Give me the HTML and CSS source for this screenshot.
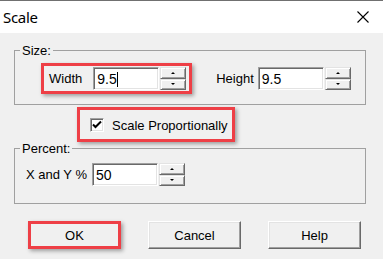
FILE: index.html
```html
<!DOCTYPE html>
<html>
<head lang="en">
    <meta charset="UTF-8">
    <title>Scale</title>
    <link rel="stylesheet" href="styles.css">
</head>
<body>
<div id="dialog">
    <div class="titlebar">
        <span class="title">Scale</span>
        <svg class="close" width="12" height="12" viewBox="0 0 12 12">
            <path d="M0.5 0.5 L11.5 11.5 M11.5 0.5 L0.5 11.5" stroke="#000" stroke-width="1.1" fill="none"/>
        </svg>
    </div>
    <div class="content">
        <fieldset class="group">
            <legend>Size:</legend>
            <div class="size-row">
                <div class="field mark">
                    <span class="label">Width</span>
                    <div class="spin">
                        <div class="input">9.5<span class="caret"></span></div>
                        <div class="arrows">
                            <div class="up"><i></i></div>
                            <div class="down"><i></i></div>
                        </div>
                    </div>
                </div>
                <div class="field height">
                    <span class="label">Height</span>
                    <div class="spin">
                        <div class="input">9.5</div>
                        <div class="arrows">
                            <div class="up"><i></i></div>
                            <div class="down"><i></i></div>
                        </div>
                    </div>
                </div>
            </div>
        </fieldset>
        <div class="check-row">
            <div class="mark check">
                <span class="box">
                    <svg width="12" height="12" viewBox="0 0 12 12">
                        <path d="M2 5.5 L4.5 8 L10 2.5" stroke="#000" stroke-width="2" fill="none"/>
                    </svg>
                </span>
                <span>Scale Proportionally</span>
            </div>
        </div>
        <fieldset class="group percent">
            <legend>Percent:</legend>
            <div class="percent-row">
                <div class="field">
                    <span class="label">X and Y %</span>
                    <div class="spin">
                        <div class="input">50</div>
                        <div class="arrows">
                            <div class="up"><i></i></div>
                            <div class="down"><i></i></div>
                        </div>
                    </div>
                </div>
            </div>
        </fieldset>
        <div class="buttons">
            <div class="btn ok">OK</div>
            <div class="btn">Cancel</div>
            <div class="btn">Help</div>
        </div>
    </div>
</div>
</body>
</html>
```

FILE: styles.css
```css
*{
    margin: 0;
    padding: 0;
    box-sizing: border-box;
}
body{
    font-family: "Liberation Sans", Arial, sans-serif;
    font-size: 13px;
    color: #000;
}
#dialog{
    width: 383px;
    height: 259px;
    background: #f0f0f0;
}
.titlebar{
    height: 33px;
    background: #fff;
    border-top: 1px solid #707070;
    display: flex;
    align-items: center;
    justify-content: space-between;
    padding: 0 14px 1px 3px;
}
.title{
    font-family: "Noto Sans", "Open Sans", sans-serif;
    font-size: 15px;
    letter-spacing: -0.3px;
}
.content{
    padding: 10px 17px 0 14px;
}
.group{
    border: 1px solid #a0a0a0;
    min-width: 0;
}
.group legend{
    margin-left: 5px;
    padding: 0 2px;
    line-height: 15px;
}
.size-row{
    display: flex;
    align-items: center;
    padding: 5px 0 10px 26px;
}
.field{
    display: flex;
    align-items: center;
}
.mark{
    border: 3px solid #ee3f46;
    box-shadow: 2px 2px 4px rgba(0, 0, 0, 0.35);
}
.size-row .mark{
    padding: 1px 3px 1px 5px;
}
.size-row .mark .label{
    margin-right: 11px;
}
.height{
    margin-left: 24px;
}
.height .label{
    margin-right: 4px;
}
.spin{
    display: flex;
    gap: 1px;
}
.input{
    width: 66px;
    height: 23px;
    background: #fff;
    border: 1px solid;
    border-color: #a0a0a0 #fff #fff #a0a0a0;
    box-shadow: inset 1px 1px 0 #696969, inset -1px -1px 0 #e3e3e3;
    font-size: 14px;
    line-height: 20px;
    padding: 1px 0 0 3px;
    display: flex;
    align-items: center;
}
.caret{
    display: inline-block;
    width: 1px;
    height: 15px;
    background: #000;
}
.arrows{
    width: 26px;
    height: 23px;
    display: flex;
    flex-direction: column;
}
.arrows div{
    flex: 1;
    background: #f0f0f0;
    border: 1px solid;
    border-color: #e3e3e3 #696969 #696969 #e3e3e3;
    box-shadow: inset 1px 1px 0 #fff, inset -1px -1px 0 #a0a0a0;
    display: flex;
    align-items: center;
    justify-content: center;
}
.arrows i{
    width: 0;
    height: 0;
    border-left: 2px solid transparent;
    border-right: 2px solid transparent;
}
.up i{
    border-bottom: 2px solid #000;
}
.down i{
    border-top: 2px solid #000;
}
.check-row{
    display: flex;
    margin-top: 2px;
    padding-left: 63px;
}
.check{
    height: 35px;
    display: flex;
    align-items: center;
    padding: 1px 4px 0 10px;
    gap: 8px;
}
.box{
    width: 14px;
    height: 14px;
    background: #fff;
    border: 1px solid;
    border-color: #a0a0a0 #fff #fff #a0a0a0;
    box-shadow: inset 1px 1px 0 #696969, inset -1px -1px 0 #e3e3e3;
    display: flex;
    align-items: center;
    justify-content: center;
}
.box svg{
    display: block;
}
.percent{
    margin-top: -1px;
}
.percent-row{
    padding: 7px 0 17px 11px;
}
.percent .label{
    margin-right: 5px;
}
.buttons{
    display: flex;
    gap: 27px;
    margin-top: 17px;
    padding-left: 14px;
}
.btn{
    width: 93px;
    height: 28px;
    border: 1px solid;
    border-color: #fff #696969 #696969 #fff;
    box-shadow: inset -1px -1px 0 #a0a0a0, inset 1px 1px 0 #e3e3e3;
    display: flex;
    align-items: center;
    justify-content: center;
}
.btn.ok{
    border: 3px solid #ee3f46;
    box-shadow: 2px 2px 4px rgba(0, 0, 0, 0.35);
}
```
